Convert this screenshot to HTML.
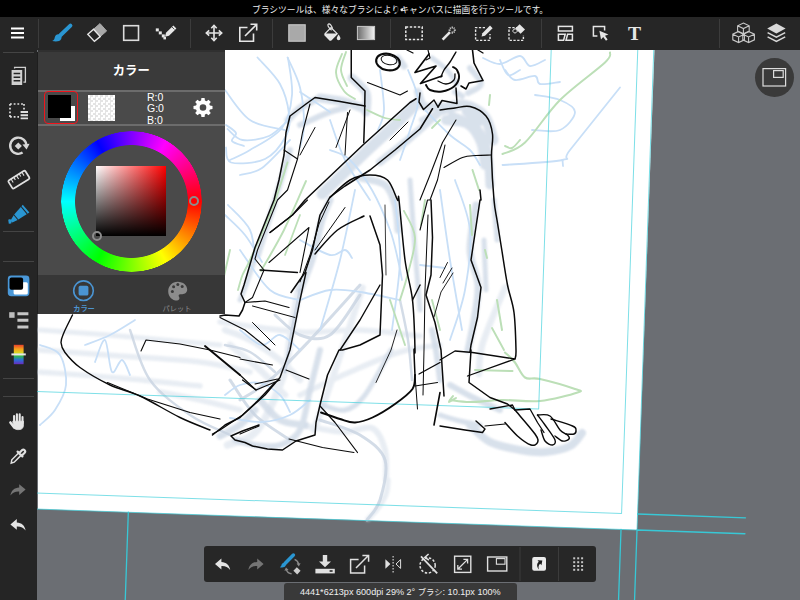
<!DOCTYPE html>
<html lang="ja"><head><meta charset="utf-8"><title>MediBang Paint</title>
<style>
*{box-sizing:border-box;margin:0;padding:0}
html,body{width:800px;height:600px;overflow:hidden;background:#6b6e73;font-family:"Liberation Sans","Noto Sans CJK JP",sans-serif;color:#fff}
#stage{position:absolute;left:0;top:0;width:800px;height:600px;overflow:hidden;background:#6b6e73}
#cv{position:absolute;left:0;top:0}
#topbar{position:absolute;left:0;top:0;width:800px;height:17px;background:#000;text-align:center;font-size:8.75px;line-height:20px;color:#ececec;white-space:nowrap;overflow:hidden}
#toolbar{position:absolute;left:0;top:17px;width:800px;height:33px;background:#262626}
#side{position:absolute;left:0;top:50px;width:37px;height:550px;background:#252525}
.vsep{position:absolute;top:2px;width:1px;height:29px;background:#3c3c3c}
.hsep{position:absolute;left:3px;width:31px;height:1px;background:#444}
#panel{position:absolute;left:38px;top:52px;width:186.5px;height:262.3px;background:#4a4a4a;box-shadow:0 -2px 0 #303030,-1px 0 0 #1e1e1e}
#phead{position:absolute;left:0;top:0;width:186.5px;height:39px;background:#3a3a3a;text-align:center;line-height:39.5px;font-size:12.3px;font-weight:bold}
.pl{position:absolute;left:0;width:186.5px;height:2px;background:#6c6c6c}
#ptabs{position:absolute;left:0;top:223.2px;width:186.5px;height:39.1px;background:#373737}
#rgb{position:absolute;left:109px;top:40.2px;font-size:10.5px;line-height:11.2px;color:#fff}
.tl{position:absolute;font-size:7.2px;width:60px;text-align:center;top:251.7px;line-height:10px}
#bbar{position:absolute;left:204px;top:546px;width:392px;height:36px;background:#272727;border-radius:3px}
#status{position:absolute;left:283.6px;top:583.4px;width:233.4px;height:17px;border-radius:3px 3px 0 0;background:#393939;font-size:9.1px;line-height:18.4px;text-align:center;white-space:nowrap;color:#f0f0f0}
#nav{position:absolute;left:755px;top:58px;width:39px;height:39px;border-radius:50%;background:#3a3a3a}
svg{position:absolute;left:0;top:0;overflow:visible}
</style></head><body>
<div id="stage">
<!--CANVAS-->
<svg id="cv" width="800" height="600" viewBox="0 0 800 600">
<polygon points="38,50 654.5,50 637,530 38,509" fill="#fff"/>
<!--SKETCH--><defs><filter id="sb" x="-5%" y="-5%" width="110%" height="110%"><feGaussianBlur stdDeviation="0.9"/></filter></defs><g fill="none" stroke-linecap="round" stroke-linejoin="round">
<g stroke="#d2dce8" opacity="0.85" filter="url(#sb)">
<path d="M320 98C324.2 98.7 338.0 100.3 345 102C352.0 103.7 359.2 107.0 362 108" stroke-width="9"/>
<path d="M288 120C290.0 118.0 295.5 111.3 300 108C304.5 104.7 312.5 101.3 315 100" stroke-width="7"/>
<path d="M352 78C354.3 80.5 363.7 87.3 366 93C368.3 98.7 366.0 108.8 366 112" stroke-width="9"/>
<path d="M415 105C411.7 108.3 402.5 117.8 395 125C387.5 132.2 378.3 140.2 370 148C361.7 155.8 353.0 164.3 345 172C337.0 179.7 325.8 190.3 322 194" stroke-width="11"/>
<path d="M437 114C432.5 118.0 419.5 130.0 410 138C400.5 146.0 385.0 158.0 380 162" stroke-width="8"/>
<path d="M440 110C443.3 109.2 454.2 105.2 460 105C465.8 104.8 470.7 106.7 475 109C479.3 111.3 483.0 113.8 486 119C489.0 124.2 491.8 136.5 493 140" stroke-width="11"/>
<path d="M452 116C456.0 118.0 470.2 122.3 476 128C481.8 133.7 484.7 140.5 487 150C489.3 159.5 489.5 179.2 490 185" stroke-width="9"/>
<path d="M418 92C419.0 94.3 420.3 103.7 424 106C427.7 108.3 437.3 106.0 440 106" stroke-width="8"/>
<path d="M470 68C471.8 70.7 481.3 79.8 481 84C480.7 88.2 470.2 91.5 468 93" stroke-width="6"/>
<path d="M432 58C434.5 60.0 442.8 65.7 447 70C451.2 74.3 455.3 81.7 457 84" stroke-width="5"/>
<path d="M455 92L462 96" stroke-width="6"/>
<path d="M398 58L404 66" stroke-width="7"/>
<path d="M290 150C287.5 158.3 280.3 182.5 275 200C269.7 217.5 260.8 245.8 258 255" stroke-width="6"/>
<path d="M410 180C410.8 191.7 413.3 228.3 415 250C416.7 271.7 419.2 300.0 420 310" stroke-width="5"/>
<path d="M484 240L486 290" stroke-width="5"/>
<path d="M446 120C449.7 120.7 462.2 120.3 468 124C473.8 127.7 478.2 135.2 481 142C483.8 148.8 484.3 161.2 485 165" stroke-width="10"/>
<path d="M466 112L480 122" stroke-width="8"/>
<path d="M345 108C342.5 108.7 337.5 109.2 330 112C322.5 114.8 305.0 122.8 300 125" stroke-width="6"/>
<path d="M422 120L440 112" stroke-width="6"/>
<path d="M360 178C364.2 179.2 379.2 180.5 385 185C390.8 189.5 392.8 197.5 395 205C397.2 212.5 397.5 225.8 398 230" stroke-width="7"/>
<path d="M494 200L497 240" stroke-width="5"/>
<path d="M476 205C475.0 212.5 469.7 236.7 470 250C470.3 263.3 477.3 273.3 478 285C478.7 296.7 475.7 309.2 474 320C472.3 330.8 469.0 345.0 468 350" stroke-width="7"/>
<path d="M300 290C302.0 285.0 308.3 271.7 312 260C315.7 248.3 319.0 230.0 322 220C325.0 210.0 328.7 203.3 330 200" stroke-width="7"/>
<path d="M240 300C241.0 297.5 243.0 293.3 246 285C249.0 276.7 253.2 263.3 258 250C262.8 236.7 272.2 212.5 275 205" stroke-width="5"/>
<path d="M320 350C318.3 356.7 313.3 376.7 310 390C306.7 403.3 305.0 420.8 300 430C295.0 439.2 287.5 442.5 280 445C272.5 447.5 262.5 445.8 255 445C247.5 444.2 238.3 440.8 235 440" stroke-width="6"/>
<path d="M260 400C263.3 403.3 272.5 415.8 280 420C287.5 424.2 300.8 424.2 305 425" stroke-width="7"/>
<path d="M255 410C252.5 412.5 245.8 420.7 240 425C234.2 429.3 223.3 434.2 220 436" stroke-width="7"/>
<path d="M391 350C386.7 357.5 372.7 385.0 365 395C357.3 405.0 352.2 408.3 345 410C337.8 411.7 325.8 405.8 322 405" stroke-width="5"/>
<path d="M470 425C473.3 427.8 481.7 437.8 490 442C498.3 446.2 510.8 448.3 520 450C529.2 451.7 536.7 452.7 545 452C553.3 451.3 563.8 449.2 570 446C576.2 442.8 580.0 435.2 582 433" stroke-width="8"/>
<path d="M450 385C453.3 386.8 461.7 391.8 470 396C478.3 400.2 495.0 407.7 500 410" stroke-width="6"/>
<path d="M440 415C443.3 416.0 453.3 419.3 460 421C466.7 422.7 476.7 424.3 480 425" stroke-width="5"/>
<path d="M432 330C432.7 333.3 434.7 341.7 436 350C437.3 358.3 439.3 375.0 440 380" stroke-width="6"/>
</g><g stroke="#d2dce8" opacity="0.5" filter="url(#sb)">
<path d="M160 392C166.7 393.3 186.7 397.0 200 400C213.3 403.0 233.3 408.3 240 410" stroke-width="5.5"/>
<path d="M40 350C53.3 351.0 93.3 354.0 120 356C146.7 358.0 178.3 359.3 200 362C221.7 364.7 241.7 370.3 250 372" stroke-width="5.5"/>
<path d="M40 330C53.3 331.0 90.0 333.5 120 336C150.0 338.5 203.3 343.5 220 345" stroke-width="5.0"/>
<path d="M220 322C233.3 323.7 276.7 330.7 300 332C323.3 333.3 340.0 329.3 360 330C380.0 330.7 410.0 335.0 420 336" stroke-width="5.5"/>
<path d="M300 395C308.3 391.2 333.3 379.2 350 372C366.7 364.8 385.0 356.5 400 352C415.0 347.5 433.3 346.2 440 345" stroke-width="5.5"/>
<path d="M225 330C229.2 331.7 240.8 335.0 250 340C259.2 345.0 271.7 353.3 280 360C288.3 366.7 296.7 376.7 300 380" stroke-width="6.5"/>
<path d="M230 345C235.0 349.2 250.8 361.7 260 370C269.2 378.3 280.8 390.8 285 395" stroke-width="6.5"/>
<path d="M362.5 287.5C359.4 296.9 350.2 325.2 344 344C337.8 362.8 330.0 385.7 325 400C320.0 414.3 315.8 425.0 314 430" stroke-width="6.5"/>
<path d="M299 287.5C297.5 296.2 292.5 325.6 290 340C287.5 354.4 289.4 359.0 284 374C278.6 389.0 266.9 418.2 257.5 430C248.1 441.8 232.5 442.5 227.5 445" stroke-width="7.5"/>
<path d="M306 426C312.3 427.0 333.0 431.7 344 432C355.0 432.3 365.2 425.0 372 428C378.8 431.0 382.7 441.3 385 450C387.3 458.7 385.8 475.0 386 480" stroke-width="6.0"/>
<path d="M505 287.5C501.2 296.9 486.8 329.6 482.5 344C478.2 358.4 479.6 369.0 479 374" stroke-width="6.5"/>
<path d="M40 372C53.3 373.0 93.3 375.7 120 378C146.7 380.3 186.7 384.7 200 386" stroke-width="5.5"/>
<path d="M388 480C387.7 482.3 387.7 489.3 386 494C384.3 498.7 381.0 503.8 378 508C375.0 512.2 369.7 517.2 368 519" stroke-width="5.5"/>
</g><g stroke="#c9d4e2" opacity="0.8">
<path d="M130 330C133.3 338.3 140.0 365.8 150 380C160.0 394.2 176.7 405.8 190 415C203.3 424.2 223.3 431.7 230 435" stroke-width="2.5"/>
<path d="M275 315C279.2 318.3 290.8 331.7 300 335C309.2 338.3 320.0 341.7 330 335C340.0 328.3 355.0 301.7 360 295" stroke-width="3"/>
<path d="M320 420C326.7 422.5 349.2 428.3 360 435C370.8 441.7 381.7 449.2 385 460C388.3 470.8 383.0 490.0 380 500C377.0 510.0 369.2 516.7 367 520" stroke-width="3"/>
<path d="M240 400C245.0 396.7 258.3 390.0 270 380C281.7 370.0 295.0 355.8 310 340C325.0 324.2 351.7 294.2 360 285" stroke-width="3"/>
<path d="M230 380C234.2 385.8 245.0 405.0 255 415C265.0 425.0 284.2 435.8 290 440" stroke-width="3"/>
<path d="M225 345C229.2 346.2 241.7 347.5 250 352C258.3 356.5 270.8 368.7 275 372" stroke-width="2.5"/>
<path d="M400 300C401.3 306.7 406.0 326.7 408 340C410.0 353.3 411.3 373.3 412 380" stroke-width="2.5"/>
<path d="M300 290C298.7 296.7 294.5 316.3 292 330C289.5 343.7 286.2 365.0 285 372" stroke-width="3"/>
</g><g stroke="#c8dff7">
<path d="M257.5 57.5C261.2 61.9 274.8 74.6 280 84C285.2 93.4 288.0 105.3 289 114C290.0 122.7 290.0 128.5 286 136C282.0 143.5 274.2 154.6 265 159C255.8 163.4 237.5 164.4 231 162.5C224.5 160.6 226.8 150.0 226 147.5" stroke-width="1.8"/>
<path d="M287.5 57.5C289.6 62.5 297.2 76.2 300 87.5C302.8 98.8 304.0 115.0 304 125C304.0 135.0 300.7 143.8 300 147.5" stroke-width="1.8"/>
<path d="M227.5 129C230.0 130.8 235.6 138.8 242.5 140C249.4 141.2 261.5 139.2 269 136C276.5 132.8 284.4 123.5 287.5 121" stroke-width="1.8"/>
<path d="M226 125C227.7 126.3 235.0 130.3 236 133C237.0 135.7 230.7 138.8 232 141C233.3 143.2 242.0 145.2 244 146" stroke-width="1.8"/>
<path d="M230 160C233.3 158.3 241.3 155.3 250 150C258.7 144.7 275.0 137.2 282 128C289.0 118.8 291.0 106.7 292 95C293.0 83.3 288.7 64.2 288 58" stroke-width="1.8"/>
<path d="M300 92C302.0 93.3 307.0 96.7 312 100C317.0 103.3 327.0 110.0 330 112" stroke-width="1.8"/>
<path d="M380 70C380.7 76.7 384.3 100.0 384 110C383.7 120.0 379.0 126.7 378 130" stroke-width="1.8"/>
<path d="M408 70C409.7 75.0 417.7 90.0 418 100C418.3 110.0 413.0 120.0 410 130C407.0 140.0 401.7 155.0 400 160" stroke-width="1.8"/>
<path d="M330 150C333.3 151.7 343.0 153.3 350 160C357.0 166.7 365.3 178.3 372 190C378.7 201.7 385.7 218.3 390 230C394.3 241.7 396.0 251.7 398 260C400.0 268.3 401.3 276.7 402 280" stroke-width="1.8"/>
<path d="M300 240C305.0 242.5 322.5 253.3 330 255C337.5 256.7 341.3 249.5 345 250C348.7 250.5 350.8 256.7 352 258" stroke-width="1.8"/>
<path d="M225 215C228.3 218.3 238.8 227.2 245 235C251.2 242.8 259.2 257.5 262 262" stroke-width="1.8"/>
<path d="M483 58C485.8 59.0 493.8 64.3 500 64C506.2 63.7 515.0 55.7 520 56C525.0 56.3 525.8 65.3 530 66C534.2 66.7 542.5 61.0 545 60" stroke-width="1.8"/>
<path d="M505 70C506.7 71.7 510.0 79.0 515 80C520.0 81.0 530.8 75.3 535 76C539.2 76.7 535.8 83.0 540 84C544.2 85.0 556.7 82.3 560 82" stroke-width="1.8"/>
<path d="M535 95C539.2 95.8 553.3 97.2 560 100C566.7 102.8 575.0 107.0 575 112C575.0 117.0 567.2 127.0 560 130C552.8 133.0 536.7 130.0 532 130" stroke-width="1.8"/>
<path d="M620 87.5C611.7 97.9 579.6 137.9 570 150C560.4 162.1 573.8 157.5 562.5 160C551.2 162.5 512.5 164.2 502.5 165" stroke-width="1.8"/>
<path d="M562.5 160L563 166" stroke-width="1.8"/>
<path d="M425 110C429.2 114.2 442.5 128.3 450 135C457.5 141.7 465.0 145.0 470 150C475.0 155.0 478.3 162.5 480 165" stroke-width="1.8"/>
<path d="M40 345C43.3 346.7 55.7 348.3 60 355C64.3 361.7 66.8 375.8 66 385C65.2 394.2 59.3 403.3 55 410C50.7 416.7 42.5 422.5 40 425" stroke-width="1.8"/>
<path d="M85 345C89.2 343.3 101.7 339.2 110 335C118.3 330.8 130.8 322.5 135 320" stroke-width="1.8"/>
<path d="M95 362C96.7 358.3 102.2 338.3 105 340C107.8 341.7 109.2 368.7 112 372C114.8 375.3 119.0 359.5 122 360C125.0 360.5 128.7 372.5 130 375" stroke-width="1.8"/>
<path d="M225 395C227.5 393.3 234.2 387.0 240 385C245.8 383.0 253.3 381.3 260 383C266.7 384.7 275.0 390.2 280 395C285.0 399.8 288.3 409.2 290 412" stroke-width="1.8"/>
<path d="M230 418C235.3 418.7 252.0 422.5 262 422C272.0 421.5 282.0 418.7 290 415C298.0 411.3 306.7 402.5 310 400" stroke-width="1.8"/>
<path d="M240 330C243.7 332.5 255.3 344.2 262 345C268.7 345.8 273.7 334.2 280 335C286.3 335.8 296.7 347.5 300 350" stroke-width="1.8"/>
<path d="M300 300C305.0 298.3 320.0 291.3 330 290C340.0 288.7 348.3 290.3 360 292C371.7 293.7 393.3 298.7 400 300" stroke-width="1.8"/>
<path d="M420 265L445 268" stroke-width="1.8"/>
<path d="M395 200C395.8 210.0 400.5 238.3 400 260C399.5 281.7 393.3 318.3 392 330" stroke-width="1.8"/>
<path d="M355 190C352.5 201.7 345.8 236.7 340 260C334.2 283.3 323.3 318.3 320 330" stroke-width="1.8"/>
<path d="M440 190C441.7 201.7 446.3 236.7 450 260C453.7 283.3 460.0 318.3 462 330" stroke-width="1.8"/>
<path d="M240 250C245.0 256.7 260.0 281.7 270 290C280.0 298.3 295.0 298.3 300 300" stroke-width="1.8"/>
<path d="M225 90C229.2 95.0 240.0 113.3 250 120C260.0 126.7 279.2 128.3 285 130" stroke-width="1.8"/>
<path d="M240 175C243.7 173.8 253.7 173.8 262 168C270.3 162.2 285.3 144.7 290 140" stroke-width="1.8"/>
<path d="M228 205C231.7 209.2 245.5 220.5 250 230C254.5 239.5 254.2 256.7 255 262" stroke-width="1.8"/>
<path d="M330 120C332.5 126.7 338.3 146.7 345 160C351.7 173.3 365.8 193.3 370 200" stroke-width="1.8"/>
<path d="M455 180C457.5 188.3 468.3 211.7 470 230C471.7 248.3 468.3 271.7 465 290C461.7 308.3 452.5 331.7 450 340" stroke-width="1.8"/>
<path d="M500 60C501.3 62.5 504.7 73.3 508 75C511.3 76.7 518.0 70.8 520 70" stroke-width="1.8"/>
</g><g stroke="#bcdfb7">
<path d="M342 54C341.0 57.1 335.7 66.3 336 72.5C336.3 78.7 340.8 86.6 344 91C347.2 95.4 353.2 97.7 355 99" stroke-width="1.9000000000000001"/>
<path d="M346 52C345.2 55.0 340.8 64.3 341 70C341.2 75.7 346.0 83.3 347 86" stroke-width="1.9000000000000001"/>
<path d="M287.5 162.5C285.0 170.0 278.8 191.2 272.5 207.5C266.2 223.8 255.0 248.8 250 260C245.0 271.2 244.5 270.0 242.5 275C240.5 280.0 238.8 287.5 238 290" stroke-width="1.9000000000000001"/>
<path d="M306 181C302.3 189.2 291.5 215.0 284 230C276.5 245.0 264.8 264.2 261 271" stroke-width="1.9000000000000001"/>
<path d="M367 110C370.0 111.3 379.5 116.3 385 118C390.5 119.7 397.5 119.7 400 120" stroke-width="1.8"/>
<path d="M610 52.5C609.2 54.2 613.3 54.6 605 62.5C596.7 70.4 573.3 86.7 560 100C546.7 113.3 534.6 133.5 525 142.5C515.4 151.5 506.2 152.1 502.5 154" stroke-width="2.0"/>
<path d="M490 95L489 105" stroke-width="2.0"/>
<path d="M472.5 170L479 190" stroke-width="2.0"/>
<path d="M404 211C405.8 215.4 414.4 226.8 415 237.5C415.6 248.2 410.0 264.6 407.5 275C405.0 285.4 401.2 295.8 400 300" stroke-width="1.9000000000000001"/>
<path d="M425 200L421 225" stroke-width="1.9000000000000001"/>
<path d="M470 205L472 235" stroke-width="2.0"/>
<path d="M485 250L487 258" stroke-width="2.0"/>
<path d="M497 300L502 330" stroke-width="2.0"/>
<path d="M492 328L504 350" stroke-width="1.9000000000000001"/>
<path d="M520 140C518.7 141.3 514.5 147.0 512 148C509.5 149.0 506.2 146.3 505 146" stroke-width="1.9000000000000001"/>
<path d="M450 400C453.3 400.3 461.2 402.0 470 402C478.8 402.0 490.8 400.2 502.5 400C514.2 399.8 527.5 402.2 540 401C552.5 399.8 571.7 394.5 577.5 392.5C583.3 390.5 581.2 391.2 575 389C568.8 386.8 548.3 380.9 540 379C531.7 377.1 529.2 380.2 525 377.5C520.8 374.8 518.3 366.7 515 362.5C511.7 358.3 506.7 354.2 505 352.5" stroke-width="2.1"/>
<path d="M475 370L512.5 371" stroke-width="2.0"/>
<path d="M453 396C452.3 397.0 448.5 401.7 449 402C449.5 402.3 454.8 398.7 456 398" stroke-width="2.0"/>
<path d="M440 120L432 128" stroke-width="1.8"/>
<path d="M390 300L405 345" stroke-width="1.9000000000000001"/>
<path d="M432 300L440 330" stroke-width="1.9000000000000001"/>
<path d="M230 250L222 285" stroke-width="1.9000000000000001"/>
<path d="M300 215L285 255" stroke-width="1.8"/>
</g><g transform="translate(637 530) rotate(2)" stroke="#3fd0dc" stroke-width="1" fill="none">
<path d="M-16 -620V-16H-700" opacity=".68"/>
<path d="M-102.5 -620V-117.5H-700" opacity=".68"/>
<path d="M0 -620V0H-700" opacity=".7"/>
<path d="M-16 0V90M0 0V90M0 -16H108M0 0H108M-509 0V100" stroke="#38c8d6" stroke-width="1.3"/>
</g><g stroke="#0a0a0a">
<path d="M351.25 50L351.25 77.5L365 91L364.5 120L363.75 142.5" stroke-width="1.5"/>
<path d="M367.5 82.5L400 95L407.5 91" stroke-width="1.1"/>
<path d="M429 54L415 72.5L436 66L420.5 83.5L442 76" stroke-width="1.7"/>
<path d="M456 52C455.0 53.7 452.0 59.0 450 62C448.0 65.0 445.5 67.5 444 70C442.5 72.5 441.5 75.8 441 77" stroke-width="1.4"/>
<path d="M407 50L413 53" stroke-width="1.2"/>
<path d="M428 50L430 58L426 60" stroke-width="1.1"/>
<path d="M472.5 50L474 63L483 80.5L469 83L466 89L461 86" stroke-width="1.6"/>
<path d="M478 50L483 53" stroke-width="1.4"/>
<path d="M420 93L419 102L423.5 109.5L434 100L438 107" stroke-width="1.5"/>
<path d="M456 88L457 103.5L442 100.5L438 107" stroke-width="1.5"/>
<path d="M440 110C442.5 109.7 450.0 108.6 455 108C460.0 107.4 464.8 105.2 470 106.5C475.2 107.8 482.2 111.4 486 116C489.8 120.6 491.6 127.1 492.5 134C493.4 140.9 491.2 146.5 491.5 157.5C491.8 168.5 493.1 189.6 494 200C494.9 210.4 495.8 212.5 497 220C498.2 227.5 499.2 234.2 501 245C502.8 255.8 505.3 273.8 507.5 285C509.7 296.2 512.6 301.7 514 312.5C515.4 323.3 515.8 342.2 516 350C516.2 357.8 515.2 357.5 515 359" stroke-width="1.5"/>
<path d="M444 167.5C447.1 165.8 457.2 159.5 462.5 157.5C467.8 155.5 471.2 155.9 476 155.5C480.8 155.1 488.5 155.1 491 155" stroke-width="1.1"/>
<path d="M456 120L442.5 142.5L430 175L420 200" stroke-width="1.1"/>
<path d="M445 145L437.5 180L430 200L427.5 200L420 230" stroke-width="1.1"/>
<path d="M480 190L481 200L480 200L472.5 250L471 260L481 287.5L477.5 317.5L471 345L470 352" stroke-width="1.5"/>
<path d="M365 106L340 101.5L315 97.5L306 104L290 116L286 132.5L284 155L279 180L274 200L255 247.5L244 285L241 294L245 302.5L242.5 310L239 316L225 315L220 316" stroke-width="1.5"/>
<path d="M284 150L297.5 159" stroke-width="1.1"/>
<path d="M310 104L302.5 132.5L297.5 159L287.5 190L277.5 200L257.5 250L255 259L264 270L252.5 297.5L245 302.5" stroke-width="1.1"/>
<path d="M315 127.5L300 155" stroke-width="1"/>
<path d="M350 110L336 147.5" stroke-width="1"/>
<path d="M347.5 112.5L345 155" stroke-width="1"/>
<path d="M416 98.75L410 102.5L364 144L305 200L292.5 215L270 232.5" stroke-width="1.5"/>
<path d="M432.5 108.75L420 129L395 150L370 170L345 186L330 197L320 215L312.5 250L305 272.5L291 292.5" stroke-width="1.5"/>
<path d="M408 122L390 140" stroke-width="1"/>
<path d="M329 202L319 224L310 255L300 282" stroke-width="1"/>
<path d="M330 197.5C333.3 194.6 343.3 183.8 350 180C356.7 176.2 363.8 175.0 370 175C376.2 175.0 382.9 175.8 387.5 180C392.1 184.2 395.6 196.7 397.5 200C399.4 203.3 397.8 190.0 399 200C400.2 210.0 402.8 243.3 405 260C407.2 276.7 410.8 285.0 412.5 300C414.2 315.0 414.8 341.7 415 350C415.2 358.3 414.0 345.8 414 350C414.0 354.2 414.8 370.8 415 375" stroke-width="1.5"/>
<path d="M260 270L297.5 272.5" stroke-width="1.3"/>
<path d="M245 302.5L265 301L289 307.5" stroke-width="1.2"/>
<path d="M252.5 306L295 317.5" stroke-width="1"/>
<path d="M307.5 200L292.5 215L270 232.5" stroke-width="1.1"/>
<path d="M269 262.5L309 227.5L300 272.5" stroke-width="1.1"/>
<path d="M315 254C318.8 250.0 329.3 236.3 337.5 230C345.7 223.7 359.6 218.3 364 216" stroke-width="1.5"/>
<path d="M315 250L345 207.5" stroke-width="1"/>
<path d="M306 272.5L300 300L295 325L290 350L280 377.5L265 395L240 417.5L225 425L212.5 435" stroke-width="1.4"/>
<path d="M370 216L380 245L382.5 275L380 335L360 345L342.5 350L339 350L327.5 375L320 405L316 422.5L315 435L296 441L282.5 450L267.5 449L252.5 446L245 442.5L235 440L231 436L242.5 431L259 425" stroke-width="1.5"/>
<path d="M380 285L360 320L340 350" stroke-width="1.4"/>
<path d="M385 205L386 275" stroke-width="0.8"/>
<path d="M420 285L412.5 300" stroke-width="1.4"/>
<path d="M220 317.5L245 330L270 350" stroke-width="1.2"/>
<path d="M252.5 322.5L275 345" stroke-width="1"/>
<path d="M431 200L432.5 237.5L431 275L426 295L435 322.5L441 350L444 396" stroke-width="1.5"/>
<path d="M428 215L425 290L424 350L423 395" stroke-width="1"/>
<path d="M447.5 262.5L440 277.5" stroke-width="0.9"/>
<path d="M452 268L443 283" stroke-width="0.9"/>
<path d="M453 273L441 292L434 317" stroke-width="0.9"/>
<path d="M240 359L272.5 365" stroke-width="1.1"/>
<path d="M240 375L256 390" stroke-width="1.2"/>
<path d="M255 384L277.5 379" stroke-width="1.1"/>
<path d="M286 370L309 379" stroke-width="1.1"/>
<path d="M240 434L259 426" stroke-width="1.1"/>
<path d="M321 412.5C324.2 413.6 334.3 417.3 340 419C345.7 420.7 349.6 422.8 355 422.5C360.4 422.2 365.8 420.6 372.5 417.5C379.2 414.4 388.3 408.8 395 404C401.7 399.2 409.2 393.8 412.5 389C415.8 384.2 414.6 377.3 415 375" stroke-width="1.9"/>
<path d="M320 406L335 422.5L357.5 452.5" stroke-width="1.2"/>
<path d="M289 439L322.5 447.5L354 452.5" stroke-width="1.1"/>
<path d="M397 330L391 350L376 382.5" stroke-width="0.9"/>
<path d="M415 375L417.5 409" stroke-width="1"/>
<path d="M440 362.5L419 374" stroke-width="1.4"/>
<path d="M415 386L437.5 382.5" stroke-width="1.1"/>
<path d="M440 392.5L434 425" stroke-width="1.6"/>
<path d="M72.5 315C71.1 317.9 65.9 327.9 64 332.5C62.1 337.1 60.8 339.2 61 342.5C61.2 345.8 61.8 348.3 65 352.5C68.2 356.7 72.5 362.1 80 367.5C87.5 372.9 100.0 380.2 110 385C120.0 389.8 128.3 390.6 140 396C151.7 401.4 168.3 411.8 180 417.5C191.7 423.2 205.0 427.9 210 430" stroke-width="1.4"/>
<path d="M107.5 382.5L147.5 399L190 412.5L220 419" stroke-width="1.2"/>
<path d="M141 351L146 340L180 344L210 350L240 357.5" stroke-width="1.1"/>
<path d="M205 346L240 375" stroke-width="1.9"/>
<path d="M212.5 434L220 430L242.5 415L257.5 401L275 382.5" stroke-width="1.4"/>
<path d="M242.5 380L256 390L280 380" stroke-width="1.2"/>
<path d="M471 350L469 382.5L490 397.5L507.5 404L515 410" stroke-width="1.5"/>
<path d="M440 360L455 351L472.5 352.5L515 359L467.5 376" stroke-width="1.3"/>
<path d="M440 426L465 430L482.5 432.5L485 429L476 421" stroke-width="1.4"/>
<path d="M485 426L505 424" stroke-width="1.2"/>
<path d="M490 409L512.5 405L515 410L530 409L537.5 422.5L544 432.5" stroke-width="1.3"/>
<path d="M505 422.5C507.1 424.8 513.2 432.2 517.5 436C521.8 439.8 527.7 443.9 531 445C534.3 446.1 536.8 444.3 537.5 442.5C538.2 440.7 538.8 439.4 535 434C531.2 428.6 518.3 414.0 515 410" stroke-width="1.5"/>
<path d="M541 430C541.7 431.8 543.1 438.5 545 441C546.9 443.5 550.8 445.2 552.5 445C554.2 444.8 556.2 443.3 555 440C553.8 436.7 547.9 429.2 545 425C542.1 420.8 538.8 416.7 537.5 415" stroke-width="1.4"/>
<path d="M537.5 415C539.6 415.2 546.2 413.5 550 416C553.8 418.5 557.1 426.8 560 430C562.9 433.2 566.0 433.5 567.5 435C569.0 436.5 569.8 438.0 569 439C568.2 440.0 564.8 441.5 562.5 441C560.2 440.5 556.2 436.8 555 436" stroke-width="1.4"/>
<path d="M551 419C554.6 420.2 568.3 424.2 572.5 426C576.7 427.8 575.8 428.7 576 430C576.2 431.3 575.7 433.3 574 434C572.3 434.7 567.3 434.0 566 434" stroke-width="1.4"/>
<path d="M426 85C426.7 85.8 427.3 88.9 430 90C432.7 91.1 438.0 92.1 442 91.5C446.0 90.9 451.2 88.8 454 86.5C456.8 84.2 458.5 80.8 459 78C459.5 75.2 458.0 71.8 457 70C456.0 68.2 453.7 67.5 453 67" stroke-width="1.9"/>
<path d="M438 81C439.3 81.5 443.3 84.2 446 84C448.7 83.8 452.5 81.7 454 80C455.5 78.3 454.8 75.0 455 74" stroke-width="1.3"/>
<ellipse cx="388" cy="62" rx="12" ry="8.2" stroke-width="2.1" transform="rotate(12 388 62)"/>
<ellipse cx="389" cy="60" rx="8" ry="4.6" stroke-width="1.0" transform="rotate(12 389 60)"/>
</g></g><!--/SKETCH-->
</svg>
<div id="topbar">ブラシツールは、様々なブラシによりキャンバスに描画を行うツールです。</div>
<div id="toolbar">
<div class="vsep" style="left:38px"></div><div class="vsep" style="left:190px"></div><div class="vsep" style="left:272px"></div><div class="vsep" style="left:390px"></div><div class="vsep" style="left:541px"></div><div class="vsep" style="left:719px"></div>
<!--TBICONS-->
</div>
<div id="side">
<div class="hsep" style="top:2px"></div><div class="hsep" style="top:181px"></div><div class="hsep" style="top:211px"></div><div class="hsep" style="top:328px"></div><div class="hsep" style="top:346px"></div>
<!--SIDEICONS-->
</div>
<div id="panel">
<div id="phead">カラー</div>
<div class="pl" style="top:38.3px"></div><div class="pl" style="top:72.1px"></div>
<div id="rgb">R:0<br>G:0<br>B:0</div>
<div style="position:absolute;left:6px;top:39px;width:34px;height:33px;border:1.7px solid #f2141c;border-radius:4px"></div>
<div style="position:absolute;left:22px;top:54px;width:15px;height:15px;background:#fff"></div>
<div style="position:absolute;left:9.5px;top:42.5px;width:23.5px;height:23px;background:#000"></div>
<div style="position:absolute;left:50px;top:42.5px;width:27px;height:26.5px;background:#fff;background-image:conic-gradient(#e4e4e4 25%,#fff 0 50%,#e4e4e4 0 75%,#fff 0);background-size:5px 5px"></div>
<div style="position:absolute;left:22.7px;top:78.8px;width:141px;height:141px;border-radius:50%;background:conic-gradient(from 90deg,#f00,#ff0,#0f0,#0ff,#00f,#f0f,#f00);-webkit-mask:radial-gradient(circle,transparent 56px,#000 56.8px,#000 70px,transparent 70.6px);mask:radial-gradient(circle,transparent 56px,#000 56.8px,#000 70px,transparent 70.6px)"></div>
<div style="position:absolute;left:58px;top:114px;width:70px;height:70px;background:linear-gradient(to bottom,rgba(0,0,0,0),#000),linear-gradient(to right,#fff,#f00)"></div>
<div style="position:absolute;left:151.3px;top:144px;width:10px;height:10px;border-radius:50%;border:2px solid #8c8c8c"></div>
<div style="position:absolute;left:53.7px;top:178.7px;width:10px;height:10px;border-radius:50%;border:2px solid #8c8c8c"></div>

<div id="ptabs"></div>
<div class="tl" style="left:16px;color:#4d94cf;font-weight:bold">カラー</div>
<div class="tl" style="left:109px;color:#8e8e8e">パレット</div>
</div>
<div id="nav"></div>
<div id="bbar"></div>
<svg id="icons" width="800" height="600" viewBox="0 0 800 600" style="pointer-events:none">
<g id="tb" fill="none" stroke="#e6e6e6" stroke-width="1.5">
<!-- hamburger -->
<path d="M11 28.5H24M11 33H24M11 37.5H24" stroke-width="2.2" stroke="#fff"/>
<!-- brush -->
<path d="M70.4 25.6L60.6 35" stroke="#2a96d2" stroke-width="4" stroke-linecap="round"/>
<path d="M59.4 34.6c2 0.8 2.8 2.6 1.8 4.4c-1.4 2.6-5.2 3-9 2c2-0.8 2.2-2.2 2.6-3.8c0.6-2.2 2.6-3.4 4.6-2.6z" fill="#2a96d2" stroke="none"/>
<!-- eraser -->
<path d="M100 23.6L106.6 31L100.2 36.6L93.6 29.2Z" fill="#a8a8a8" stroke="#a8a8a8" stroke-width="1"/>
<path d="M93.6 29.2L100.2 36.6L94.4 41.4L87.8 34.2Z" fill="#262626" stroke="#e6e6e6" stroke-width="1.4"/>
<!-- square -->
<rect x="123.7" y="25.7" width="14.8" height="14.6" stroke-width="1.6" stroke="#dcdcdc"/>
<!-- dotted pen -->
<g fill="#e6e6e6" stroke="none"><rect x="155.8" y="28.4" width="3" height="3"/><rect x="158.8" y="31.4" width="3" height="3"/><rect x="161.8" y="34.4" width="3" height="3"/><rect x="163.4" y="37" width="2.6" height="2.4"/>
<path d="M165 36.8l1-4l7.4-7.4l3 3l-7.4 7.4z"/></g>
<path d="M172 27l2.4 2.4" stroke="#262626" stroke-width="0.8"/>
<!-- move -->
<path d="M214 25.5V40.5M206.5 33H221.5" stroke-width="1.6"/>
<path d="M211.3 28.2L214 25.3L216.7 28.2M211.3 37.8L214 40.7L216.7 37.8M209.2 30.3L206.3 33L209.2 35.7M218.8 30.3L221.7 33L218.8 35.7" stroke-width="1.6"/>
<!-- transform -->
<path d="M247.5 27.5H239.8V41.2H253.5V33.5" stroke-width="1.6"/>
<path d="M245 36L256.5 24.5M250.5 24.3H256.7V30.5" stroke-width="1.6"/>
<!-- fill square -->
<rect x="288.8" y="24.8" width="16.4" height="16.4" fill="#a9a9a9" stroke="#c4c4c4" stroke-width="1.2"/>
<!-- bucket -->
<path d="M324.6 33.2L331 26.8L338 33.8L331.4 40.4Q330.4 41.2 329.4 40.4L324.6 35.4Q323.8 34.2 324.6 33.2Z" fill="#e6e6e6" stroke="none"/>
<path d="M326 33.4L331 28.4L336.2 33.4Z" fill="#262626" stroke="none"/>
<path d="M331.6 30.2C328.4 27.4 327 25 328.4 24C329.8 23.2 331.6 25.6 332.6 28.6" stroke-width="1.2"/>
<path d="M338.6 34.6c1.2 1.8 1.8 2.8 1.8 3.8a1.8 1.8 0 0 1-3.6 0c0-1 .6-2 1.8-3.8z" fill="#e6e6e6" stroke="none"/>
<!-- gradient -->
<defs><linearGradient id="gr" x1="0" x2="1"><stop offset="0" stop-color="#6a6a6a"/><stop offset="1" stop-color="#f4f4f4"/></linearGradient></defs>
<rect x="357.4" y="26.4" width="17.2" height="13.2" fill="url(#gr)" stroke="#c8c8c8" stroke-width="1"/>
<!-- select rect -->
<rect x="405.8" y="27" width="16.4" height="12.6" stroke-dasharray="2.4 1.6" stroke-width="1.5"/>
<!-- magic wand -->
<path d="M442.6 39.6L450 32.2" stroke-width="2.6"/>
<path d="M452.2 26.4V28.6M452.2 31.6V33.8M448.6 30.1H450.6M453.8 30.1H455.8M449.8 27.7L450.8 28.7M454.6 27.7L453.6 28.7M454.6 32.5L453.6 31.5" stroke-width="1.1"/>
<!-- select pen -->
<path d="M485 27.6H475.6V40.4H490V34" stroke-dasharray="2.3 1.5" stroke-width="1.4"/>
<path d="M481.6 36.6l0.8-3.4l7.6-7.6l2.6 2.6l-7.6 7.6z" fill="#e6e6e6" stroke="none"/>
<!-- select eraser -->
<path d="M518.4 27.6H509V40.4H523.4V35" stroke-dasharray="2.3 1.5" stroke-width="1.4"/>
<path d="M519.6 24.2L525 29.4L520.6 33.8L515.2 28.6Z" fill="#e6e6e6" stroke="none"/>
<path d="M515.2 28.6L517.6 31L515.8 32.8Q515 33.4 514.2 32.8L513 31.6Q512.4 30.8 513 30.2Z" stroke-width="1" />
<!-- panel divide -->
<rect x="558.4" y="26.4" width="14" height="4.6" stroke-width="1.5"/>
<path d="M558.4 34.2H565.2L563.6 40.2H558.4Z M567.6 34.2H572.4V40.2H566Z" stroke-width="1.5"/>
<!-- select arrow -->
<path d="M604.6 30.4V26.6H593.4V36H597.4" stroke-width="1.5"/>
<path d="M599.4 30.8L608.4 34.6L605 35.8L607.6 39.6L606 40.8L603.2 37L601 39.6Z" fill="#e6e6e6" stroke="none"/>
<!-- cubes -->
<g stroke-width="1.1" stroke="#c8c8c8">
<path d="M743.4 23L749.2 25.8V31.4L743.4 34.2L737.6 31.4V25.8Z M737.6 25.8L743.4 28.6L749.2 25.8M743.4 28.6V34.2"/>
<path d="M738.6 31.4L744.4 34.2V39.8L738.6 42.6L732.8 39.8V34.2Z M732.8 34.2L738.6 37L744.4 34.2M738.6 37V42.6"/>
<path d="M748.6 31.4L754.4 34.2V39.8L748.6 42.6L742.8 39.8V34.2Z M742.8 34.2L748.6 37L754.4 34.2M748.6 37V42.6"/>
</g>
<!-- layers -->
<path d="M776.4 23.4L785.6 28.4L776.4 33.4L767.2 28.4Z" fill="#d8d8d8" stroke="none"/>
<path d="M767.6 32.6L776.4 37.2L785.2 32.6M767.6 36.8L776.4 41.4L785.2 36.8" stroke-width="1.5" stroke="#d8d8d8"/>
</g>
<text x="634.6" y="40.2" font-family="'Liberation Serif',serif" font-weight="bold" font-size="19.6" fill="#e6e6e6" text-anchor="middle">T</text>
<circle cx="398.6" cy="9.6" r="3.6" fill="#000" opacity=".75"/><circle cx="401.8" cy="9.8" r="1.4" fill="#e8e8e8"/>
<!-- nav button -->
<g fill="none" stroke="#dcdcdc" stroke-width="1.2"><rect x="763" y="68.6" width="22.6" height="17.4"/><rect x="773.6" y="70.6" width="9.6" height="6.8"/></g>
<g id="pn"><path d="M210.0 105.6L212.5 105.9L212.5 109.1L210.0 109.4L209.2 111.1L210.8 113.0L208.5 115.3L206.6 113.7L204.9 114.5L204.6 117.0L201.4 117.0L201.1 114.5L199.4 113.7L197.5 115.3L195.2 113.0L196.8 111.1L196.0 109.4L193.5 109.1L193.5 105.9L196.0 105.6L196.8 103.9L195.2 102.0L197.5 99.7L199.4 101.3L201.1 100.5L201.4 98.0L204.6 98.0L204.9 100.5L206.6 101.3L208.5 99.7L210.8 102.0L209.2 103.9Z M206.3 107.5A3.3 3.3 0 1 0 199.7 107.5A3.3 3.3 0 1 0 206.3 107.5Z" fill="#fff" fill-rule="evenodd"/>
<circle cx="83.5" cy="290.7" r="9.8" fill="none" stroke="#4a94d2" stroke-width="1.6"/>
<rect x="78.6" y="285.8" width="9.8" height="9.8" rx="1.6" fill="#4a94d2"/>
<path d="M177.6 281.8c5.600000000000001 0 9.6 3.6 9.6 7.800000000000001c0 3-2.4 4.6-4.8 4.6h-2.2c-1.4 0-2 1.4-1.2 2.6c1 1.4 .4 3.6-1.800000000000001 3.800000000000001c-5.200000000000001 0-9-4.2-9-9.400000000000001c0-5.200000000000001 4.2-9.400000000000001 9.4-9.400000000000001z" fill="#8c8c8c"/>
<g fill="#3a3a3a"><circle cx="172.4" cy="291.4" r="1.5"/><circle cx="173.6" cy="286.8" r="1.5"/><circle cx="177.8" cy="284.6" r="1.5"/><circle cx="182.2" cy="286.6" r="1.5"/></g></g>
<g id="sd" fill="none" stroke="#e0e0e0" stroke-width="1.4">
<!-- pages -->
<path d="M14.6 68.6V67.4H25.4V82.2H23.4" stroke-width="1.3" stroke="#cfcfcf"/>
<rect x="11.6" y="70" width="10.6" height="15" fill="#d0d0d0" stroke="none"/>
<path d="M13.6 73.6H20.2M13.6 77.2H20.2M13.6 80.8H20.2" stroke="#252525" stroke-width="1.5"/>
<!-- selection -->
<path d="M10 104H24.6M10 104V117.6M10 116.8H19M24 104V109.5" stroke-dasharray="1.8 1.9" stroke-width="1.7"/>
<path d="M20.6 112H28M20.6 115.2H28M20.6 118.4H28" stroke-width="1.9"/>
<!-- rotate -->
<path d="M22.6 152.6A8.1 8.1 0 1 1 26.4 146" stroke-width="2.4" stroke="#d6d6d6"/>
<path d="M22.4 144.4L26.6 149.6L29.6 143.8Z" fill="#d6d6d6" stroke="none"/>
<path d="M18.3 142.4L21.9 146L18.3 149.6L14.700000000000001 146Z" fill="#d6d6d6" stroke="none"/>
<!-- ruler -->
<g transform="rotate(-32 18.9 179.7)"><rect x="8.9" y="174.9" width="20" height="9.6" rx="1.4" stroke-width="1.8"/><path d="M12.6 175V179M15.8 175V178M19 175V179M22.2 175V178M25.4 175V179" stroke-width="1.1"/></g>
<!-- pen blue -->
<path d="M22.8 204.8L29.4 212.6L18.4 219.6L14.2 214.6Z" fill="#2a96d2" stroke="none"/>
<path d="M20.6 206L27.2 213.8" stroke="#252525" stroke-width="1.1"/>
<path d="M13.6 215.2L17.6 220L12.4 222.6L10.6 220.4Z" fill="#2a96d2" stroke="none"/>
<path d="M8.2 219.8l2-.8l1.6 2l-.6 2.4l-2.4 .4z" fill="#2a96d2" stroke="none"/>
<!-- colour swatch -->
<rect x="7.8" y="275.6" width="21.6" height="20.6" rx="3.4" fill="#4a98d8" stroke="none"/>
<rect x="13.6" y="282.2" width="14.2" height="12.2" rx="1.5" fill="#fff" stroke="none"/>
<rect x="9.5" y="277.4" width="13.6" height="12.4" rx="2" fill="#000" stroke="none"/>
<!-- list -->
<rect x="9.2" y="312.2" width="5.4" height="5.6" fill="#bdbdbd" stroke="none"/>
<path d="M17.4 313.7H28.4M17.4 320.2H28.4M17.4 327H28.4" stroke="#c6c6c6" stroke-width="3"/>
<!-- rainbow -->
<defs><linearGradient id="rb" x1="0" x2="0" y1="0" y2="1"><stop offset="0" stop-color="#e8402a"/><stop offset=".22" stop-color="#f5a21c"/><stop offset=".42" stop-color="#d8d820"/><stop offset=".58" stop-color="#2cb84a"/><stop offset=".78" stop-color="#2a6ed8"/><stop offset="1" stop-color="#6a2cc0"/></linearGradient></defs>
<rect x="13.8" y="344.8" width="9.8" height="19.4" fill="url(#rb)" stroke="none"/>
<path d="M11.4 354.4H25.8" stroke="#e8e8e8" stroke-width="2"/>
<!-- hand -->
<g stroke="#e6e6e6" stroke-linecap="round" fill="#e6e6e6"><path d="M14.1 422V416M16.9 422V414.2M19.7 422V414.4M22.5 422V417" stroke-width="2.1" fill="none"/><path d="M14.2 427.4L10.4 422.4" stroke-width="2.5" fill="none"/><path d="M13.1 421.2H23.5V424.6Q23.5 429.6 19 429.6H17Q14.2 429.6 13.1 426.6Z" stroke-width="0.8"/></g>
<!-- eyedropper -->
<path d="M11.2 463.2L11.8 459.8L18.6 453L21 455.4L14.2 462.2Z" stroke-width="1.5"/>
<path d="M17.6 451.6L22.4 456.4M19.6 452.6L22 450.2Q23.4 449 24.6 450.2Q25.8 451.4 24.600000000000001 452.8L22.2 455.2" stroke-width="2.2" stroke-linecap="round"/>
<!-- redo dim -->
<path d="M10.4 495.6C11.2 490.6 14.4 487.8 19.2 487.6V484.2L25.6 489.6L19.2 495V491.6C15.4 491.4 12.6 492.6 10.4 495.6Z" fill="#757575" stroke="none"/>
<!-- undo -->
<path d="M25.6 530.4C24.8 525.4 21.6 522.6 16.8 522.4V519L10.4 524.4L16.8 529.8V526.4C20.6 526.2 23.4 527.4 25.6 530.4Z" fill="#e4e4e4" stroke="none"/>
</g>
<g id="bt" fill="none" stroke="#e0e0e0" stroke-width="1.4">
<path d="M520 547V581M558.5 547V581" stroke="#3c3c3c" stroke-width="1"/>
<!-- undo -->
<path d="M230.2 570C229.4 565 226.2 562.2 221.4 562V558.6L215 564L221.4 569.4V566C225.2 565.8 228 567 230.2 570Z" fill="#e4e4e4" stroke="none"/>
<!-- redo dim -->
<path d="M248.4 570C249.2 565 252.4 562.2 257.2 562V558.6L263.6 564L257.2 569.4V566C253.4 565.8 250.6 567 248.4 570Z" fill="#757575" stroke="none"/>
<!-- brush rotate -->
<path d="M293.4 555L285 563.4" stroke="#2a96d2" stroke-width="3.5" stroke-linecap="round"/>
<path d="M284.4 563c1.2.6 1.8 1.600000000000001 1.2 2.8c-.8 1.8-3.4 2-5.800000000000001 1.400000000000001c1.4-.6 1.6-1.6 1.8-2.600000000000001c.4-1.400000000000001 1.6-2 2.800000000000001-1.600000000000001z" fill="#2a96d2" stroke="none"/>
<path d="M294.6 559.4Q298.2 561 298.6 564.4" stroke="#8a8a8a" stroke-width="1.4"/><path d="M296.6 563.6L298.8 566.4L300.6 563.2Z" fill="#8a8a8a" stroke="none"/>
<path d="M291.6 573.8Q287.6 573.4 286.4 569.8" stroke="#8a8a8a" stroke-width="1.4"/><path d="M284.4 570.8L286 567.4L288.6 570Z" fill="#8a8a8a" stroke="none"/>
<path d="M296.8 567.2L300.6 570.8L297.2 574.4L293.4 570.8Z" fill="#cfcfcf" stroke="none"/>
<!-- download -->
<path d="M322.8 555H327.2V561.4H331L325 567.2L319 561.4H322.8Z" fill="#e0e0e0" stroke="none"/>
<rect x="315.4" y="568.8" width="19.4" height="4.6" fill="#e0e0e0" stroke="none"/><rect x="329.6" y="570.2" width="3" height="1.6" fill="#272727" stroke="none"/>
<!-- export -->
<path d="M358.6 559.6H350.6V573H364.6V565.4" stroke-width="1.5"/>
<path d="M356 568L368.2 555.8M362.4 555.6H368.6V561.8" stroke-width="1.5"/>
<!-- flip -->
<path d="M385.4 559.2L390.4 564L385.4 568.8Z" fill="#e0e0e0" stroke="none"/>
<path d="M400.6 559.6L396 564L400.6 568.4Z" stroke-width="1"/>
<path d="M393.1 556V572.4" stroke-dasharray="1.6 1.4" stroke-width="1.1"/>
<!-- rotate off -->
<circle cx="427.6" cy="565.4" r="7.6" stroke-dasharray="2.4 1.7" stroke-width="1.5"/>
<path d="M421 556.4L437.2 573.4" stroke-width="1.8"/>
<path d="M428.6 554L424.8 557.4L429 560.2" stroke-width="1.5"/>
<!-- expand -->
<rect x="454.6" y="556.2" width="16.2" height="16.2" stroke-width="1.4"/>
<path d="M458 569L467.4 559.6M463.4 559.4H467.6V563.6M457.8 565V569.2H462" stroke-width="1.3"/>
<!-- navigator -->
<rect x="487.6" y="557" width="19.2" height="14" stroke-width="1.4"/><rect x="496.4" y="558.6" width="8.6" height="5.6" stroke-width="1.1"/>
<!-- shortcut -->
<rect x="532.2" y="557" width="13.8" height="13.8" rx="2" fill="#ececec" stroke="none"/>
<path transform="rotate(-38 539.2 564)" d="M535.6 568.2C535.4 564.4 537.4 562.2 540.2 562V560L543.8 563.2L540.2 566.4V564.4C538 564.4 536.6 565.6 535.6 568.2Z" fill="#1c1c1c" stroke="none"/>
<g fill="#c4c4c4" stroke="none"><rect x="573.2" y="557.3" width="2" height="2"/><rect x="573.2" y="561.2" width="2" height="2"/><rect x="573.2" y="565.0" width="2" height="2"/><rect x="573.2" y="568.8" width="2" height="2"/><rect x="577.2" y="557.3" width="2" height="2"/><rect x="577.2" y="561.2" width="2" height="2"/><rect x="577.2" y="565.0" width="2" height="2"/><rect x="577.2" y="568.8" width="2" height="2"/><rect x="581.1" y="557.3" width="2" height="2"/><rect x="581.1" y="561.2" width="2" height="2"/><rect x="581.1" y="565.0" width="2" height="2"/><rect x="581.1" y="568.8" width="2" height="2"/></g>
</g>
</svg>
<div id="status">4441*6213px 600dpi 29% 2° <span style="font-size:8.3px">ブラシ</span>: 10.1px 100%</div>
</div>
</body></html>
